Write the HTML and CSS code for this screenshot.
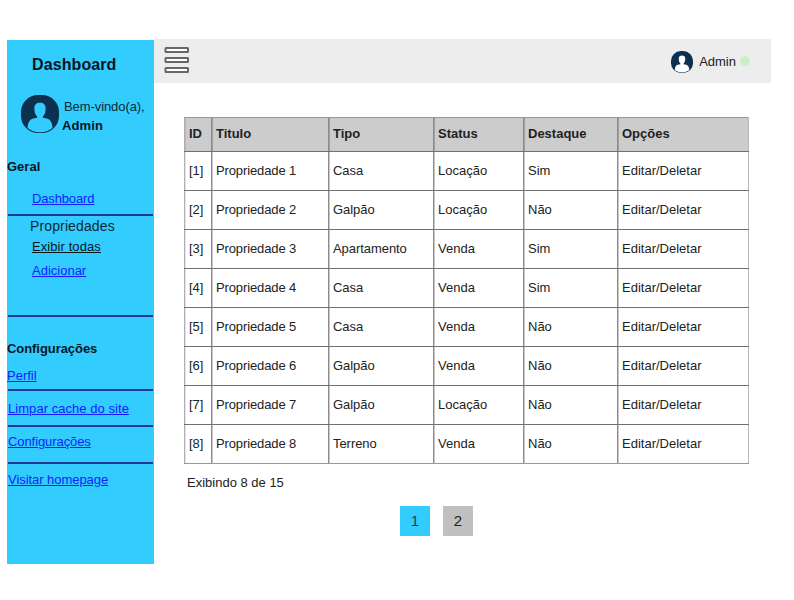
FILE: index.html
```
<!DOCTYPE html>
<html lang="pt-BR">
<head>
<meta charset="utf-8">
<title>Dashboard</title>
<link rel="stylesheet" href="styles.css">
</head>
<body>
<svg class="defs" width="0" height="0">
  <symbol id="avatar" viewBox="0 0 38 38">
    <rect width="38" height="38" rx="17" fill="#0c304f"/>
    <path d="M19 7.800c3.600 0 5.700 1.800 5.600 5.600c0 3.800-.8 6.200-2.700 7.900v1.500c3.200.4 6.600 1.200 8 3.600c1 1.800 1.500 4.200 1.600 6.600c-3.400 2.800-7.400 4.200-12.500 4.200s-9.100-1.400-12.500-4.200c.1-2.400.6-4.800 1.600-6.600c1.400-2.400 4.800-3.200 8-3.600v-1.500c-1.900-1.700-2.700-4.100-2.700-7.900c-.1-3.800 2-5.600 5.600-5.600z" fill="currentColor"/>
  </symbol>
</svg>
<div class="app">
  <aside class="sidebar">
    <h1 class="brand">Dashboard</h1>
    <div class="welcome">
      <svg class="avatar-large"><use href="#avatar"/></svg>
      <div class="welcome-text">
        <span class="hello">Bem-vindo(a),</span>
        <strong class="name">Admin</strong>
      </div>
    </div>
    <h2 class="section">Geral</h2>
    <a class="link nested home" href="#">Dashboard</a>
    <hr class="rule">
    <div class="group">Propriedades</div>
    <a class="link nested current" href="#">Exibir todas</a>
    <a class="link nested add" href="#">Adicionar</a>
    <hr class="rule wide">
    <h2 class="section settings">Configurações</h2>
    <a class="link profile" href="#">Perfil</a>
    <hr class="rule tight">
    <a class="link cache" href="#">Limpar cache do site</a>
    <hr class="rule after-cache">
    <a class="link config" href="#">Configurações</a>
    <hr class="rule after-config">
    <a class="link visit" href="#">Visitar homepage</a>
  </aside>
  <div class="page">
    <header class="topbar">
      <svg class="menu" viewBox="0 0 26 28">
        <g fill="#fff" stroke="#666" stroke-width="2">
          <rect x="1.500" y="2" width="22.500" height="4" rx=".5"/>
          <rect x="1.500" y="12" width="22.500" height="4" rx=".5"/>
          <rect x="1.500" y="22" width="22.500" height="4" rx=".5"/>
        </g>
      </svg>
      <div class="account">
        <svg class="avatar-small"><use href="#avatar"/></svg>
        <span class="account-name">Admin</span>
        <span class="online"></span>
      </div>
    </header>
    <main class="content">
      <table class="listing">
        <colgroup><col class="c-id"><col class="c-title"><col class="c-type"><col class="c-status"><col class="c-star"><col class="c-options"></colgroup>
        <thead><tr><th>ID</th><th>Titulo</th><th>Tipo</th><th>Status</th><th>Destaque</th><th>Opções</th></tr></thead>
        <tbody>
          <tr><td>[1]</td><td>Propriedade 1</td><td>Casa</td><td>Locação</td><td>Sim</td><td>Editar/Deletar</td></tr>
          <tr><td>[2]</td><td>Propriedade 2</td><td>Galpão</td><td>Locação</td><td>Não</td><td>Editar/Deletar</td></tr>
          <tr><td>[3]</td><td>Propriedade 3</td><td>Apartamento</td><td>Venda</td><td>Sim</td><td>Editar/Deletar</td></tr>
          <tr><td>[4]</td><td>Propriedade 4</td><td>Casa</td><td>Venda</td><td>Sim</td><td>Editar/Deletar</td></tr>
          <tr><td>[5]</td><td>Propriedade 5</td><td>Casa</td><td>Venda</td><td>Não</td><td>Editar/Deletar</td></tr>
          <tr><td>[6]</td><td>Propriedade 6</td><td>Galpão</td><td>Venda</td><td>Não</td><td>Editar/Deletar</td></tr>
          <tr><td>[7]</td><td>Propriedade 7</td><td>Galpão</td><td>Locação</td><td>Não</td><td>Editar/Deletar</td></tr>
          <tr><td>[8]</td><td>Propriedade 8</td><td>Terreno</td><td>Venda</td><td>Não</td><td>Editar/Deletar</td></tr>
        </tbody>
      </table>
      <p class="summary">Exibindo 8 de 15</p>
      <nav class="pager"><span class="pg active">1</span><span class="pg">2</span></nav>
    </main>
  </div>
</div>
</body>
</html>
```
FILE: styles.css
```
* { box-sizing: border-box; }
body {
  margin: 0;
  background: #fff;
  color: #222;
  font: 13px/16px "Liberation Sans", Arial, sans-serif;
}
.defs { display: block; }
.app { display: flex; align-items: flex-start; padding: 39px 23px 0 7px; }

.sidebar {
  display: flex;
  flex-direction: column;
  width: 147px;
  height: 524px;
  margin-top: 1px;
  background: #3cf;
  white-space: nowrap;
}
.brand { margin: 17px 0 0 25px; font-size: 16px; line-height: 16px; letter-spacing: .1px; color: #08161c; }
.welcome { display: flex; gap: 3px; margin: 22px 0 0 14px; height: 38px; color: #3cf; }
.avatar-large { width: 38px; height: 38px; flex: none; }
.welcome-text { display: flex; flex-direction: column; gap: 3px; padding-top: 4px; color: #0b2a35; }
.hello { padding-left: 2px; letter-spacing: -.08px; }
.name { color: #08161c; letter-spacing: .1px; }
.section { margin: 26px 0 0; font-size: 13px; line-height: 16px; color: #08161c; }
.link { color: #0f1fff; align-self: flex-start; margin-left: 1px; }
.link.nested { margin-left: 25px; }
.link.home { margin-top: 16px; letter-spacing: -.15px; }
.rule { width: 145px; height: 2px; margin: 7px 0 0 1px; border: 0; background: #203a8f; flex: none; }
.group { margin: 2px 0 0 23px; font-size: 14px; letter-spacing: .13px; color: #0b2a35; }
.link.current { margin-top: 5px; letter-spacing: .08px; color: #08161c; }
.link.add { margin-top: 8px; }
.rule.wide { margin-top: 36px; }
.section.settings { margin-top: 24px; letter-spacing: -.06px; }
.link.profile { margin: 11px 0 0; }
.rule.tight { margin-top: 5px; }
.link.cache { margin-top: 10px; letter-spacing: .05px; }
.rule.after-cache { margin-top: 8px; }
.link.config { margin-top: 7px; letter-spacing: -.08px; }
.rule.after-config { margin-top: 12px; }
.link.visit { margin-top: 8px; letter-spacing: -.05px; }

.page { flex: 1; }
.topbar {
  display: flex;
  justify-content: space-between;
  height: 44px;
  padding: 6px 21px 0 10px;
  background: #ededed;
}
.menu { width: 26px; height: 28px; margin-top: 1px; }
.account { display: flex; align-items: center; height: 33px; color: #fff; }
.avatar-small { width: 22px; height: 22px; }
.account-name { margin-left: 6px; color: #222; }
.online { width: 10px; height: 10px; margin: -2px 0 0 4px; border-radius: 50%; background: #c8f0c8; }

.content { padding: 34px 0 0 30px; }
.listing { width: 565px; border-collapse: collapse; table-layout: fixed; }
.c-id { width: 27px; }
.c-title { width: 117px; }
.c-type { width: 105px; }
.c-status { width: 90px; }
.c-star { width: 94px; }
.c-options { width: 131px; }
th, td {
  padding: 0 0 1px 4px;
  border: 1px solid;
  border-color: #707070 #8c8c8c;
  box-shadow: inset 1px 0 rgba(0, 0, 0, .22);
  text-align: left;
  white-space: nowrap;
}
th { height: 34px; background: #ccc; border-top-color: #999; }
td { height: 39px; }
th:first-child, td:first-child { border-left-color: #b0b0b0; box-shadow: inset 1px 0 rgba(0, 0, 0, .1); }
th:last-child, td:last-child { border-right-color: #b8b8b8; }
tr:last-child td { border-bottom-color: #999; }
td:nth-child(2) { letter-spacing: -.12px; }
td:nth-child(3) { letter-spacing: -.06px; }
.summary { margin: 11px 0 0 3px; }
.pager { display: flex; gap: 13px; margin: 15px 0 0 216px; }
.pg {
  width: 30px;
  height: 30px;
  background: #c0c0c0;
  font-size: 15px;
  line-height: 30px;
  text-align: center;
}
.pg.active { background: #3cf; color: #12465a; }
```
